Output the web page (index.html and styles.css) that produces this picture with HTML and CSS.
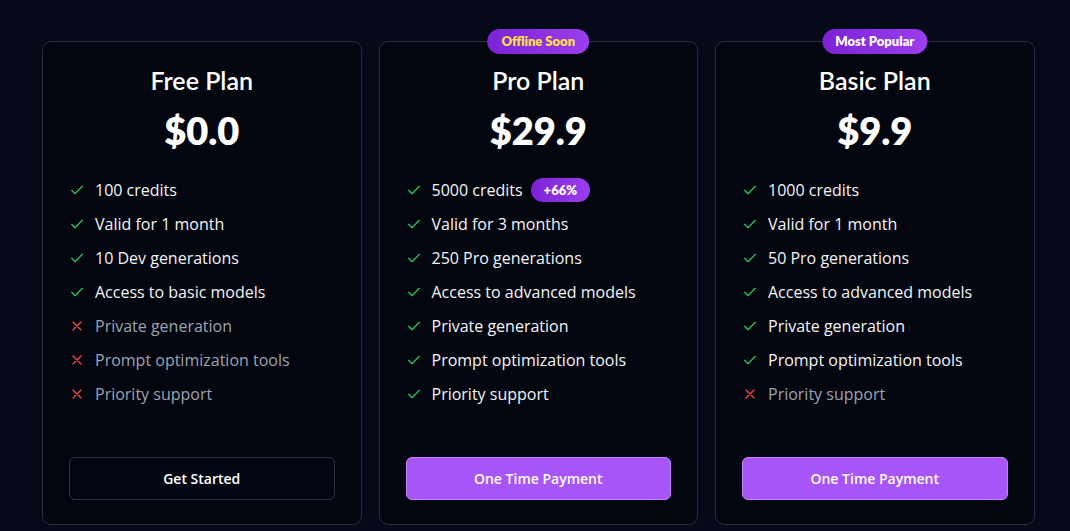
FILE: index.html
```
<!DOCTYPE html>
<html>
<head>
<meta charset="utf-8">
<link rel="stylesheet" href="styles.css">
</head>
<body>
<div class="plans">
  <div class="card">
    <h2 class="title">Free Plan</h2>
    <div class="price">$0.0</div>
    <ul class="features">
      <li class="yes"><svg viewBox="0 0 24 24"><path d="M4 12.5l5 5L20 6.5"/></svg><span>100 credits</span></li>
      <li class="yes"><svg viewBox="0 0 24 24"><path d="M4 12.5l5 5L20 6.5"/></svg><span>Valid for 1 month</span></li>
      <li class="yes"><svg viewBox="0 0 24 24"><path d="M4 12.5l5 5L20 6.5"/></svg><span>10 Dev generations</span></li>
      <li class="yes"><svg viewBox="0 0 24 24"><path d="M4 12.5l5 5L20 6.5"/></svg><span>Access to basic models</span></li>
      <li class="no"><svg viewBox="0 0 24 24"><path d="M6 6l12 12M18 6L6 18"/></svg><span>Private generation</span></li>
      <li class="no"><svg viewBox="0 0 24 24"><path d="M6 6l12 12M18 6L6 18"/></svg><span>Prompt optimization tools</span></li>
      <li class="no"><svg viewBox="0 0 24 24"><path d="M6 6l12 12M18 6L6 18"/></svg><span>Priority support</span></li>
    </ul>
    <button class="btn btn-outline">Get Started</button>
  </div>
  <div class="card">
    <div class="badge badge-yellow">Offline Soon</div>
    <h2 class="title">Pro Plan</h2>
    <div class="price">$29.9</div>
    <ul class="features">
      <li class="yes"><svg viewBox="0 0 24 24"><path d="M4 12.5l5 5L20 6.5"/></svg><span>5000 credits</span><span class="pill">+66%</span></li>
      <li class="yes"><svg viewBox="0 0 24 24"><path d="M4 12.5l5 5L20 6.5"/></svg><span>Valid for 3 months</span></li>
      <li class="yes"><svg viewBox="0 0 24 24"><path d="M4 12.5l5 5L20 6.5"/></svg><span>250 Pro generations</span></li>
      <li class="yes"><svg viewBox="0 0 24 24"><path d="M4 12.5l5 5L20 6.5"/></svg><span>Access to advanced models</span></li>
      <li class="yes"><svg viewBox="0 0 24 24"><path d="M4 12.5l5 5L20 6.5"/></svg><span>Private generation</span></li>
      <li class="yes"><svg viewBox="0 0 24 24"><path d="M4 12.5l5 5L20 6.5"/></svg><span>Prompt optimization tools</span></li>
      <li class="yes"><svg viewBox="0 0 24 24"><path d="M4 12.5l5 5L20 6.5"/></svg><span>Priority support</span></li>
    </ul>
    <button class="btn btn-primary">One Time Payment</button>
  </div>
  <div class="card">
    <div class="badge">Most Popular</div>
    <h2 class="title">Basic Plan</h2>
    <div class="price">$9.9</div>
    <ul class="features">
      <li class="yes"><svg viewBox="0 0 24 24"><path d="M4 12.5l5 5L20 6.5"/></svg><span>1000 credits</span></li>
      <li class="yes"><svg viewBox="0 0 24 24"><path d="M4 12.5l5 5L20 6.5"/></svg><span>Valid for 1 month</span></li>
      <li class="yes"><svg viewBox="0 0 24 24"><path d="M4 12.5l5 5L20 6.5"/></svg><span>50 Pro generations</span></li>
      <li class="yes"><svg viewBox="0 0 24 24"><path d="M4 12.5l5 5L20 6.5"/></svg><span>Access to advanced models</span></li>
      <li class="yes"><svg viewBox="0 0 24 24"><path d="M4 12.5l5 5L20 6.5"/></svg><span>Private generation</span></li>
      <li class="yes"><svg viewBox="0 0 24 24"><path d="M4 12.5l5 5L20 6.5"/></svg><span>Prompt optimization tools</span></li>
      <li class="no"><svg viewBox="0 0 24 24"><path d="M6 6l12 12M18 6L6 18"/></svg><span>Priority support</span></li>
    </ul>
    <button class="btn btn-primary">One Time Payment</button>
  </div>
</div>
</body>
</html>
```
FILE: styles.css
```
html, body {
  margin: 0;
  padding: 0;
  background: #060a18;
  height: 100%;
  overflow: hidden;
}
body {
  font-family: "Open Sans", "Noto Sans", sans-serif;
  color: #f3f4f6;
}
.plans {
  display: flex;
  gap: 17px;
  padding: 41px 0 0 42px;
}
.card {
  position: relative;
  width: 319.5px;
  height: 484px;
  box-sizing: border-box;
  border: 1px solid #2b2e3d;
  border-radius: 9px;
  background: #03060f;
  padding: 21px 26px 24px 26px;
  display: flex;
  flex-direction: column;
}
.title {
  margin: 0;
  text-align: center;
  font-family: "Lato", sans-serif;
  font-weight: 600;
  font-size: 25px;
  line-height: 34px;
  color: #ffffff;
}
.price {
  margin-top: 8px;
  text-align: center;
  font-family: "Lato", sans-serif;
  font-weight: 800;
  font-size: 38px;
  line-height: 50px;
  color: #ffffff;
}
.features {
  list-style: none;
  margin: 23px 0 0 0;
  padding: 0;
  display: flex;
  flex-direction: column;
  gap: 10px;
  flex: 1;
}
.features li {
  display: flex;
  align-items: center;
  height: 24px;
  font-size: 16px;
  color: #f3f4f6;
}
.features li svg {
  width: 16px;
  height: 16px;
  margin-right: 10px;
  fill: none;
  stroke-width: 2;
  stroke-linecap: round;
  stroke-linejoin: round;
  flex: none;
}
.features li.yes svg { stroke: #22c55e; }
.features li.no svg { stroke: #ef4444; }
.features li.no { color: #9ca3af; }
.pill {
  margin-left: 8px;
  background: linear-gradient(90deg, #7c22d4, #9b3ef0);
  color: #fff;
  font-family: "Lato", sans-serif;
  font-weight: 800;
  font-size: 13px;
  line-height: 24px;
  height: 24px;
  padding: 0 13px;
  border-radius: 12px;
}
.badge {
  position: absolute;
  top: -13px;
  left: 50%;
  transform: translateX(-50%);
  background: linear-gradient(90deg, #7c22d4, #9b3ef0);
  color: #fff;
  font-family: "Lato", sans-serif;
  font-weight: 800;
  font-size: 13px;
  line-height: 25px;
  height: 25px;
  padding: 0 13px;
  border-radius: 13px;
  white-space: nowrap;
}
.badge-yellow { color: #fde047; padding: 0 14px; }
.btn {
  width: 100%;
  height: 43px;
  border-radius: 6px;
  font-family: "Open Sans", sans-serif;
  font-weight: 600;
  font-size: 14px;
  color: #ffffff;
  cursor: pointer;
}
.btn-outline {
  background: #030612;
  border: 1px solid #2f3242;
}
.btn-primary {
  background: #a855f7;
  border: 1px solid #c084fc;
}
```
